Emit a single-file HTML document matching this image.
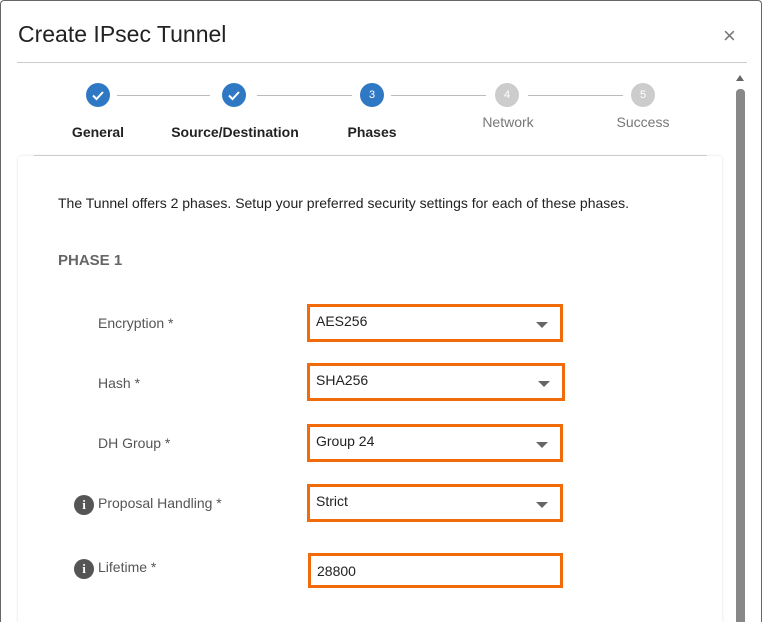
<!DOCTYPE html><html style="overflow:hidden"><head><style>
html,body{margin:0;width:764px;height:622px;overflow:hidden}
body{background:#fff;font-family:"Liberation Sans",sans-serif;position:relative}
.modal{position:absolute;left:0;top:0;width:762px;height:622px;border:1px solid #666;border-bottom:none;border-radius:4px 4px 0 0;background:#fff;box-sizing:border-box;overflow:hidden}
.a{position:absolute}
h1{position:absolute;left:17px;top:20px;margin:0;font-weight:normal;font-size:23px;color:#222}
.circ{position:absolute;width:24px;height:24px;border-radius:50%;color:#fff;font-size:11px;text-align:center;line-height:24px}
.b{background:#2f78c4}.g{background:#ccc}
.ln{position:absolute;height:1px;background:#bbb;top:94px}
.lbl{position:absolute;font-size:14px;transform:translateX(-50%);white-space:nowrap}
.fl{position:absolute;left:97px;font-size:14px;color:#555}
.sel{position:absolute;left:306px;border:3px solid #f26b0a;font-size:14px;color:#222;line-height:29px;padding-left:6px;box-sizing:border-box;height:38px;width:256px}
.sel .car{position:absolute;right:12px;top:15px;border-left:6px solid transparent;border-right:6px solid transparent;border-top:6px solid #666}
.info{position:absolute;left:73px;width:20px;height:20px;border-radius:50%;background:#555;color:#fff;font-weight:bold;font-size:13px;text-align:center;line-height:20px;font-family:"Liberation Serif",serif}
</style></head><body><div class="modal">
<h1>Create IPsec Tunnel</h1>
<div class="a" style="left:722px;top:22px;font-size:22px;color:#777">×</div>
<div class="a" style="left:16px;top:61px;width:730px;height:1px;background:#ccc"></div>
<div class="a" style="left:17px;top:155px;width:704px;height:480px;background:#fff;box-shadow:0 0 3px rgba(0,0,0,.12);border-radius:4px"></div>
<div class="a" style="left:33px;top:154px;width:673px;height:1px;background:#ccc"></div>
<div class="a" style="left:735px;top:88px;width:9px;height:540px;background:#888;border-radius:4px"></div>
<div class="a" style="left:735px;top:74px;border-left:4px solid transparent;border-right:4px solid transparent;border-bottom:6px solid #666"></div>
<div class="ln" style="left:116px;width:93px"></div>
<div class="ln" style="left:256px;width:95px"></div>
<div class="ln" style="left:390px;width:95px"></div>
<div class="ln" style="left:527px;width:95px"></div>
<div class="circ b" style="left:85px;top:82px"><svg width="24" height="24"><path d="M7 12.5l3.5 3.5 6.5-7" stroke="#fff" stroke-width="2" fill="none"/></svg></div>
<div class="circ b" style="left:221px;top:82px"><svg width="24" height="24"><path d="M7 12.5l3.5 3.5 6.5-7" stroke="#fff" stroke-width="2" fill="none"/></svg></div>
<div class="circ b" style="left:359px;top:82px">3</div>
<div class="circ g" style="left:494px;top:82px">4</div>
<div class="circ g" style="left:630px;top:82px">5</div>
<div class="lbl" style="left:97px;top:123px;font-weight:bold;color:#222">General</div>
<div class="lbl" style="left:234px;top:123px;font-weight:bold;color:#222">Source/Destination</div>
<div class="lbl" style="left:371px;top:123px;font-weight:bold;color:#222">Phases</div>
<div class="lbl" style="left:507px;top:113px;color:#777">Network</div>
<div class="lbl" style="left:642px;top:113px;color:#777">Success</div>
<div class="a" style="left:57px;top:194px;font-size:14px;color:#222">The Tunnel offers 2 phases. Setup your preferred security settings for each of these phases.</div>
<div class="a" style="left:57px;top:251px;font-size:15px;font-weight:bold;color:#666">PHASE 1</div>
<div class="fl" style="top:314px">Encryption *</div>
<div class="sel" style="top:303px">AES256<span class="car"></span></div>
<div class="fl" style="top:374px">Hash *</div>
<div class="sel" style="top:362px;width:258px">SHA256<span class="car"></span></div>
<div class="fl" style="top:434px">DH Group *</div>
<div class="sel" style="top:423px">Group 24<span class="car"></span></div>
<div class="info" style="top:494px">i</div>
<div class="fl" style="top:494px">Proposal Handling *</div>
<div class="sel" style="top:483px">Strict<span class="car"></span></div>
<div class="info" style="top:558px">i</div>
<div class="fl" style="top:558px">Lifetime *</div>
<div class="sel" style="top:552px;left:307px;width:255px;height:35px;line-height:30px">28800</div>
</div></body></html>
